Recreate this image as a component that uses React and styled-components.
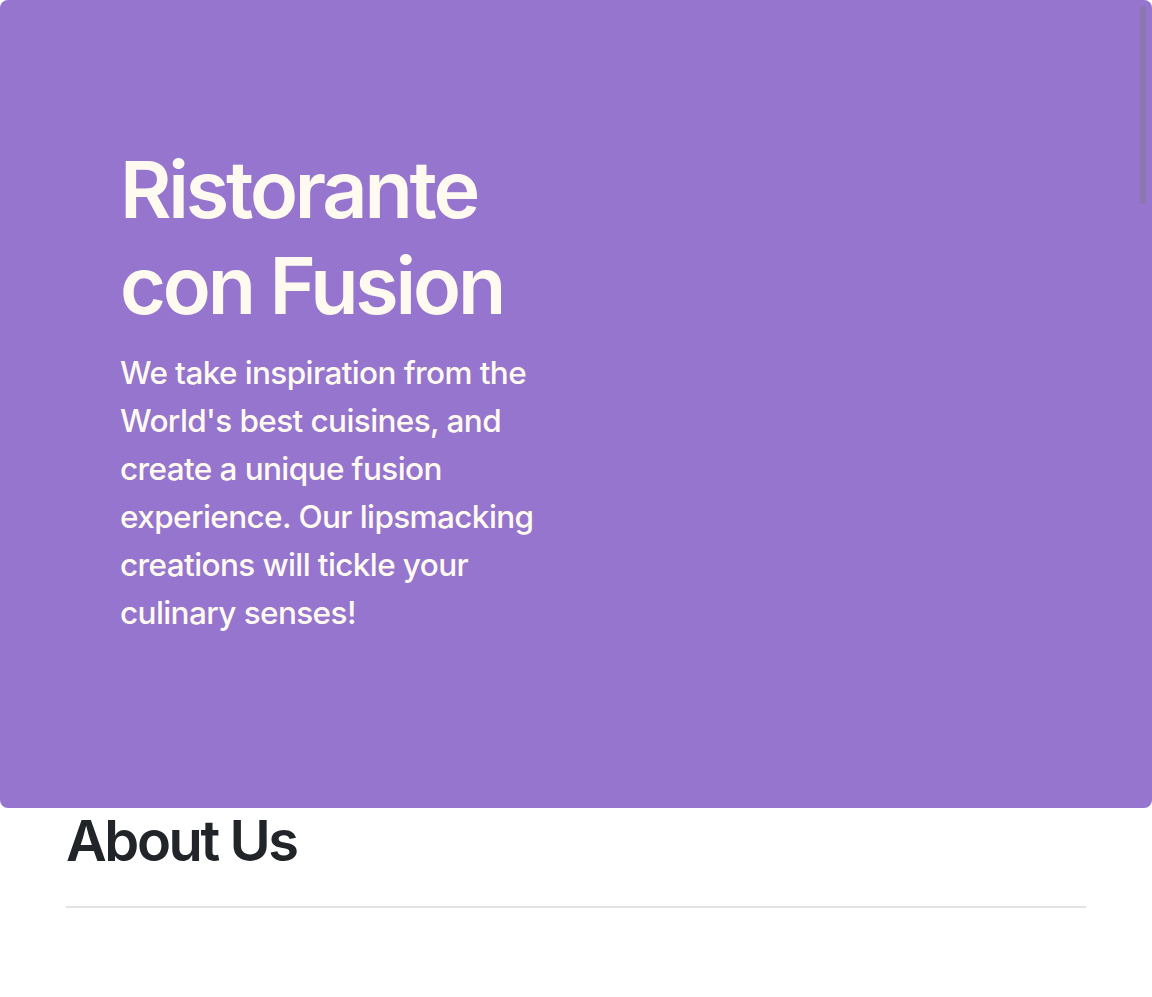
import React from "react";
import styled, { createGlobalStyle } from "styled-components";

const GlobalStyle = createGlobalStyle`
  html, body {
    margin: 0;
    padding: 0;
    overflow: hidden;
    background: #ffffff;
    font-family: Inter, "Noto Sans", "Liberation Sans", sans-serif;
    -webkit-font-smoothing: antialiased;
  }
  * { box-sizing: border-box; }
`;

const Page = styled.div`
  min-height: 997px;
  display: flex;
  flex-direction: column;
`;

const Jumbotron = styled.header`
  background-color: #9575cd;
  border-radius: 8px;
  height: 808px;
  padding: 141px 120px 0;
`;

const HeroCol = styled.div`
  width: 440px;
`;

const HeroTitle = styled.h1`
  margin: 0 0 16px;
  font-size: 79px;
  font-weight: 600;
  line-height: 96px;
  letter-spacing: -3.2px;
  color: #fffaf0;
`;

const Lead = styled.p`
  margin: 0;
  font-size: 31.5px;
  font-weight: 450;
  line-height: 48px;
  letter-spacing: -0.6px;
  color: #fffaf0;
`;

const Section = styled.section`
  padding: 0 66px;
`;

const SectionTitle = styled.h2`
  margin: 0;
  font-size: 56px;
  font-weight: 600;
  line-height: 1.2;
  letter-spacing: -2.4px;
  color: #212529;
`;

const Rule = styled.hr`
  margin: 31px 0 0;
  border: 0;
  border-top: 2px solid #e4e4e4;
`;

const ScrollThumb = styled.div`
  position: fixed;
  top: 6px;
  right: 6px;
  width: 6px;
  height: 198px;
  border-radius: 3px;
  background: rgba(120, 120, 120, 0.35);
`;

export default function App() {
  return (
    <Page>
      <GlobalStyle />
      <Jumbotron>
        <HeroCol>
          <HeroTitle>Ristorante con Fusion</HeroTitle>
          <Lead>
            We take inspiration from the World's best cuisines, and create a
            unique fusion experience. Our lipsmacking creations will tickle
            your culinary senses!
          </Lead>
        </HeroCol>
      </Jumbotron>
      <Section>
        <SectionTitle>About Us</SectionTitle>
        <Rule />
      </Section>
      <ScrollThumb />
    </Page>
  );
}
